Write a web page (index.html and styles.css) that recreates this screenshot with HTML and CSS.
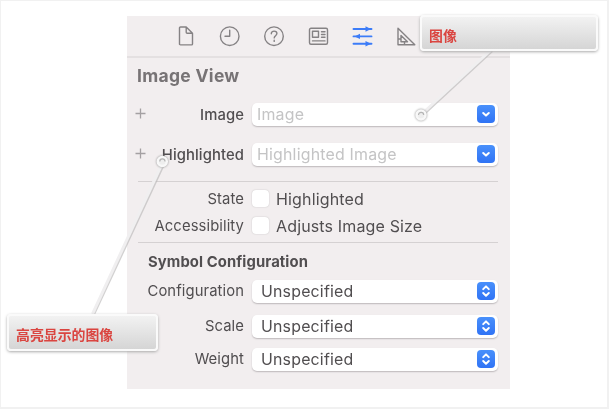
FILE: index.html
```html
<!DOCTYPE html>
<html lang="zh">
<head>
<meta charset="utf-8">
<title>Image View</title>
<link rel="stylesheet" href="styles.css">
</head>
<body>
<svg class="defs" width="0" height="0">
  <symbol id="down" viewBox="0 0 18 18"><path d="M6.200 8l2.800 2.600L11.800 8" /></symbol>
  <symbol id="updown" viewBox="0 0 18 18"><path d="M6.200 7.100L9 4.400l2.800 2.700M6.200 11l2.800 2.700 2.800-2.700" /></symbol>
</svg>
<main class="panel">
  <nav class="toolbar">
    <svg class="icon" viewBox="0 0 22 22"><path d="M5.500 2h5.700l6.300 6.200v10.700a1 1 0 0 1-1 1h-11a1 1 0 0 1-1-1V3a1 1 0 0 1 1-1zM11.200 2.200v5a1 1 0 0 0 1 1h5" /></svg>
    <svg class="icon" viewBox="0 0 22 22"><circle cx="10.700" cy="11.200" r="9.300" /><path d="M10.700 5.200v6H6" /></svg>
    <svg class="icon" viewBox="0 0 22 22"><circle cx="11" cy="11.200" r="9.300" /><path d="M8.300 8.800c0-3.700 5.600-3.300 5.600-.2 0 2-2.700 2.200-2.700 4.300M11.200 15.200v1.200" /></svg>
    <svg class="icon" viewBox="0 0 22 22"><rect x="2.500" y="3.300" width="18" height="16" rx="1.500" /><path d="M5.500 6.300h6v6h-6zM14.500 6.800h3.500M14.500 9.500h3.500M14.500 12.300h3.500M5.500 15.900h12.500" /></svg>
    <svg class="icon active" viewBox="0 0 22 22"><path d="M2.500 4h18M2.500 11.400h18M2.500 18.800h18" /><path class="solid" d="M14.500 1.300l5.500 2.700-5.500 2.700zM9 8.700l-5.500 2.700L9 14.100zM14.500 16.100l5.500 2.700-5.500 2.700z" /></svg>
    <svg class="icon" viewBox="0 0 22 22"><path d="M3 3.300v16.500h16.800zM6 10.500v6.300h6.500zM3.500 14H6M9.500 16.800v3" /></svg>
  </nav>
  <h1 class="title">Image View</h1>
  <section class="fields images">
    <div class="row">
      <svg class="plus" viewBox="0 0 11 11"><path d="M5.500 .5v10M.5 5.500h10" /></svg>
      <span class="label medium">Image</span>
      <div class="control combo"><span>Image</span><svg class="btn"><use href="#down" /></svg></div>
    </div>
    <div class="row">
      <svg class="plus" viewBox="0 0 11 11"><path d="M5.500 .5v10M.5 5.500h10" /></svg>
      <span class="label medium">Highlighted</span>
      <div class="control combo"><span>Highlighted Image</span><svg class="btn"><use href="#down" /></svg></div>
    </div>
  </section>
  <section class="fields checks">
    <div class="row"><span class="label">State</span><span class="box"></span><span class="text">Highlighted</span></div>
    <div class="row"><span class="label">Accessibility</span><span class="box"></span><span class="text">Adjusts Image Size</span></div>
  </section>
  <section class="fields symbols">
    <h2 class="subtitle">Symbol Configuration</h2>
    <div class="row"><span class="label">Configuration</span><div class="control"><span>Unspecified</span><svg class="btn"><use href="#updown" /></svg></div></div>
    <div class="row scale"><span class="label">Scale</span><div class="control"><span>Unspecified</span><svg class="btn"><use href="#updown" /></svg></div></div>
    <div class="row"><span class="label">Weight</span><div class="control"><span>Unspecified</span><svg class="btn"><use href="#updown" /></svg></div></div>
  </section>
</main>
<svg class="pointers" viewBox="0 0 609 409">
  <g class="shade"><path d="M492 51L425 113M94 314L163 166" /></g>
  <g class="line"><path d="M491 50L424.500 111.500M92.500 314L161 166" /></g>
  <g class="ring"><circle cx="421" cy="115" r="4.500" /><circle cx="162.300" cy="161.500" r="4.500" /></g>
  <g class="arc"><path d="M418.500 115a2.600 2.600 0 0 1 5.200 0M159.800 161.500a2.600 2.600 0 0 1 5.200 0" /></g>
</svg>
<div class="callout top">图像</div>
<div class="callout bottom">高亮显示的图像</div>
</body>
</html>
```
FILE: styles.css
```css
* { box-sizing: border-box; }
body {
  margin: 0;
  width: 609px;
  height: 409px;
  overflow: hidden;
  background: #fff;
  border: solid #f1f1f1;
  border-width: 1px 2px 2px 1px;
  font-family: Inter, "Noto Sans CJK SC", sans-serif;
  color: #514e50;
}
.defs { position: absolute; }
.panel {
  width: 383px;
  height: 373px;
  margin: 15px 0 0 126px;
  background: #f2eeef;
  filter: blur(.6px);
}
.toolbar {
  display: flex;
  gap: 22px;
  height: 42px;
  padding: 9px 0 0 48px;
  border-bottom: 2px solid #e4e0e1;
}
.icon {
  width: 22px;
  height: 22px;
  flex: none;
  fill: none;
  stroke: #858284;
  stroke-width: 1.400;
  stroke-linejoin: round;
  stroke-linecap: round;
}
.icon.active { stroke: #3c7cf8; stroke-width: 1.900; }
.icon .solid { fill: #3c7cf8; stroke: none; }
.title {
  margin: 0;
  height: 44px;
  padding: 6px 0 0 10px;
  font-size: 17.500px;
  line-height: 24px;
  font-weight: 650;
  letter-spacing: .3px;
  color: #777375;
}
.row { display: flex; align-items: center; height: 24px; }
.fields { margin: 0 12px 0 11px; }
.images { display: flex; flex-direction: column; gap: 16px; height: 80px; border-bottom: 1px solid #d5d1d2; }
.plus { width: 11px; height: 11px; margin: -1px -8px 0 -3px; stroke: #a4a0a2; stroke-width: 1.300; flex: none; }
.label { width: 106px; flex: none; text-align: right; font-size: 14.800px; line-height: 20px; letter-spacing: .1px; white-space: nowrap; }
.medium { font-weight: 500; padding-top: 1px; }
.control {
  display: flex;
  align-items: center;
  justify-content: space-between;
  flex: 1;
  height: 23px;
  margin-left: 8px;
  padding: 0 3px 0 9px;
  border-radius: 5px;
  background: #fff;
  box-shadow: 0 1px 1.500px #bdb8ba;
  font-size: 15.900px;
  letter-spacing: .2px;
}
.combo { padding-left: 5px; color: #c4c4c5; }
.combo .btn { margin-top: -1px; }
.btn {
  width: 18px;
  height: 18px;
  border-radius: 4px;
  background: linear-gradient(#4990fb, #3073f5);
  fill: none;
  stroke: #fff;
  stroke-width: 2;
  stroke-linecap: round;
  stroke-linejoin: round;
}
.checks { height: 61px; padding-top: 4px; border-bottom: 1px solid #d5d1d2; }
.checks .row { height: 26.500px; }
.box { width: 17px; height: 17px; margin: -1px 7px 0 8px; border-radius: 4px; background: #fff; box-shadow: 0 0 1.500px #bdb8ba; }
.text { font-size: 16px; letter-spacing: .15px; }
.subtitle { margin: 0; height: 36px; padding: 8px 0 0 10px; font-size: 14.800px; line-height: 22px; font-weight: 650; letter-spacing: .1px; }
.scale { margin: 11px 0 9px; }
.pointers { position: absolute; inset: 0; width: 609px; height: 409px; fill: none; filter: blur(.5px); }
.shade { stroke: #bab8b9; stroke-width: 2.500; opacity: .65; }
.line { stroke: #f0eff0; stroke-width: 3; }
.ring { stroke: #f8f8f8; stroke-width: 2.500; fill: #eee; filter: drop-shadow(0 .5px 1px #8b8b8b); }
.arc { stroke: #b5b5b5; stroke-width: 1.200; }
.callout {
  position: absolute;
  padding-left: 7px;
  border: 2px solid #fafafa;
  border-radius: 4px;
  background: linear-gradient(#f2f2f2, #d5d5d5);
  box-shadow: 0 1px 3px #aaa;
  color: #da4540;
  font-size: 13.900px;
  font-weight: 700;
  filter: blur(.5px);
}
.top { left: 420px; top: 15px; width: 178px; height: 36px; line-height: 38px; }
.bottom { left: 7px; top: 314px; width: 151px; height: 37px; line-height: 38px; }
```
